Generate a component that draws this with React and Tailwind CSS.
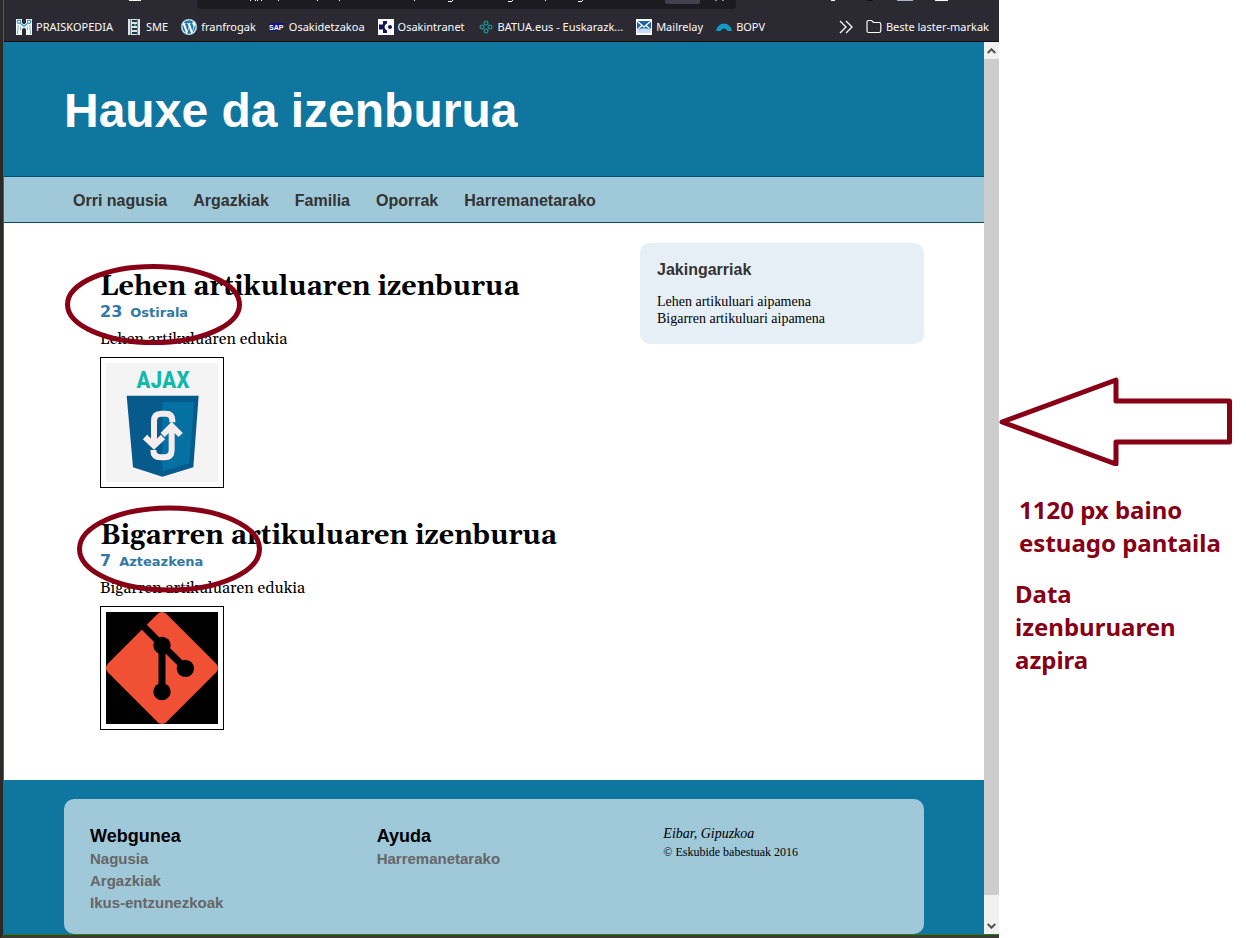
import React from "react";
import { FaWordpress } from "react-icons/fa";

const MAROON = "#880015";

function TowersIcon() {
  return (
    <svg width="16" height="16" viewBox="0 0 16 16" aria-hidden="true">
      <rect width="16" height="16" fill="#fff" />
      <path d="M6 0h4v4L8 5.500 6 4z" fill="#2b2a33" />
      <path d="M6 16v-5q0-2 2-2t2 2v5z" fill="#2b2a33" />
      <g fill="none" stroke="#2f8fb8" strokeWidth="1.2">
        <circle cx="3" cy="2.8" r="1.700" />
        <circle cx="13" cy="2.8" r="1.700" />
        <path d="M4.500 4.500 8 7.500 11.500 4.500" />
        <path d="M2.200 6 1.500 15M4.800 7.500 4.500 11M11.200 7.500l.3 3.500M13.800 6l.7 9" strokeWidth="0.700" />
      </g>
    </svg>
  );
}

function TowerIcon() {
  return (
    <svg width="16" height="16" viewBox="0 0 16 16" aria-hidden="true">
      <rect x="2" width="12" height="16" fill="#dfe3e6" />
      <rect x="4" y="0" width="1" height="16" fill="#7c838a" />
      <rect x="11" y="0" width="1" height="16" fill="#7c838a" />
      <g fill="#173c46">
        <rect x="6" y="1" width="5" height="2" />
        <rect x="6" y="5" width="5" height="2" />
        <rect x="6" y="9" width="5" height="2" />
        <rect x="6" y="13" width="5" height="2" />
      </g>
      <rect x="8" y="5" width="2" height="2" fill="#3f9a80" />
    </svg>
  );
}

function WordpressIcon() {
  return (
    <span className="flex size-4 items-center justify-center rounded-full bg-white text-[#1f7cab]">
      <FaWordpress size={16} aria-hidden="true" />
    </span>
  );
}

function SapIcon() {
  return (
    <svg width="16" height="16" viewBox="0 0 16 16" aria-hidden="true">
      <path d="M0 4h16L8 12H0z" fill="#12128a" />
      <text x="0" y="10.500" fontSize="7" fontWeight="700" fontFamily="Liberation Sans, sans-serif" fill="#fff">
        SAP
      </text>
    </svg>
  );
}

function CrossIcon() {
  return (
    <svg width="16" height="16" viewBox="0 0 16 16" aria-hidden="true">
      <rect width="16" height="16" fill="#fff" />
      <path d="M5 2h4v2.500Q6.500 5.500 6.500 8T9 11.500V14H5v-3.500H1v-5h4z" fill="#14145c" />
      <circle cx="12" cy="8" r="2" fill="#14145c" />
    </svg>
  );
}

function ClusterIcon() {
  return (
    <svg width="16" height="16" viewBox="0 0 16 16" aria-hidden="true">
      <g fill="none" stroke="#1f9390" strokeWidth="1.200">
        <circle cx="8" cy="4" r="1.900" />
        <circle cx="8" cy="12" r="1.900" />
        <circle cx="4" cy="8" r="1.900" />
        <circle cx="12" cy="8" r="1.900" />
      </g>
    </svg>
  );
}

function MailIcon() {
  return (
    <svg width="16" height="16" viewBox="0 0 16 16" aria-hidden="true">
      <rect width="16" height="16" fill="#fff" />
      <path d="M1 2h14v9H1z" fill="#1d64a8" />
      <path d="M1 2l7 6 7-6M1 11l5-4.500M15 11l-5-4.500" fill="none" stroke="#fff" strokeWidth="1.200" />
      <path d="M1 14v-2.500Q8 7 15 11.500V14z" fill="#cbdcf2" />
    </svg>
  );
}

function ArchIcon() {
  return (
    <svg width="16" height="16" viewBox="0 0 16 16" aria-hidden="true">
      <path d="M0 12Q2 4.500 8 4.500T16 12L11.500 12Q10.500 9.500 8 9.500T4.500 12z" fill="#159ac6" />
    </svg>
  );
}

const bookmarks = [
  { label: "PRAISKOPEDIA", icon: <TowersIcon /> },
  { label: "SME", icon: <TowerIcon /> },
  { label: "franfrogak", icon: <WordpressIcon /> },
  { label: "Osakidetzakoa", icon: <SapIcon /> },
  { label: "Osakintranet", icon: <CrossIcon /> },
  { label: "BATUA.eus - Euskarazk...", icon: <ClusterIcon /> },
  { label: "Mailrelay", icon: <MailIcon /> },
  { label: "BOPV", icon: <ArchIcon /> },
];

function BrowserBar() {
  return (
    <div className="border-b border-[#0c0c0d] bg-[#2b2a33]">
      <svg className="block" width="980" height="13" viewBox="4 0 980 13" aria-hidden="true">
        <path d="M197 0h539v5q0 4-4 4H201q-4 0-4-4z" fill="#1c1b22" />
        <path d="M665 0h35v2q0 2-2 2h-31q-2 0-2-2z" fill="#42414d" />
        <g fill="#fbfbfe">
          <rect x="129" width="12" height="1" />
          <path d="M250 0h1v1h-1zM255 0h1v1h-1zM257 0h1v1h-1zM261 0h1v1h-1zM278 0h1v1h-1zM317 0h1v1h-1zM339 0h1v1h-1zM414 0h1v1h-1zM545 0h1v1h-1z" />
          <path d="M448 1h4v1h-4zM508 1h4v1h-4zM578 1h4v1h-4zM452 0h1v1h-1zM512 0h1v1h-1zM582 0h1v1h-1z" />
          <rect x="831" width="4" height="1" />
          <rect x="935" width="13" height="1" />
        </g>
        <path d="M715 0h2v1h-2zM722 0h2v1h-2z" fill="#8f8f98" />
        <rect x="867" width="6" height="1" fill="#111" />
        <rect x="897" width="16" height="1" fill="#a9b6bf" />
      </svg>
      <nav
        aria-label="Laster-markak"
        className="flex h-7 items-center gap-[13px] pl-3 pr-[10px] font-['Noto_Sans',sans-serif] text-[11px] leading-4 text-[#fbfbfe]"
      >
        {bookmarks.map((b) => (
          <a key={b.label} href="#" className="flex items-center gap-1 whitespace-nowrap">
            {b.icon}
            {b.label}
          </a>
        ))}
        <button type="button" aria-label="Gehiago" className="ml-auto">
          <svg width="14" height="14" viewBox="0 0 14 14" fill="none" stroke="#fbfbfe" strokeWidth="1.300" aria-hidden="true">
            <path d="M1 1l6 6-6 6M7 1l6 6-6 6" />
          </svg>
        </button>
        <a href="#" className="flex items-center gap-1 whitespace-nowrap">
          <svg width="16" height="16" viewBox="0 0 16 16" fill="none" stroke="#fbfbfe" strokeWidth="1.200" aria-hidden="true">
            <path d="M1 3.200q0-1.700 1.700-1.700H5.500L7.500 3.500H13q1.800 0 1.800 1.800v6.400q0 1.800-1.800 1.800H2.700Q1 13.500 1 11.700z" />
          </svg>
          Beste laster-markak
        </a>
      </nav>
    </div>
  );
}

function AjaxLogo() {
  return (
    <svg className="block" width="112" height="119" viewBox="0 0 336 357" role="img" aria-label="AJAX">
      <rect width="336" height="357" fill="#f4f4f4" />
      <text
        x="171"
        y="76"
        textAnchor="middle"
        fontSize="72"
        fontWeight="700"
        fontFamily="'Roboto Condensed', 'Liberation Sans Narrow', 'DejaVu Sans Condensed', sans-serif"
        fill="#10b9ab"
      >
        AJAX
      </text>
      <path d="M62 98H278L262 313 169 341 81 313z" fill="#065b8c" />
      <path d="M169 117H264L250 301 169 325z" fill="#0571a3" />
      <g fill="none" stroke="#f6ecee" strokeWidth="18">
        <path d="M199 178v-6q0-20-20-20h-13q-22 0-22 22v68" />
        <path d="M117 222l27 26 27-26" />
        <path d="M142 261q0 22 22 22h11q22 0 22-22V196" />
        <path d="M170 216l27-27 27 27" />
      </g>
    </svg>
  );
}

function GitLogo() {
  return (
    <svg className="block" width="112" height="112" viewBox="0 0 336 336" role="img" aria-label="Git">
      <rect width="336" height="336" fill="#000" />
      <rect x="44" y="44" width="248" height="248" rx="18" fill="#f05033" transform="rotate(45 168 168)" />
      <g fill="none" stroke="#000" strokeWidth="21">
        <path d="M106 37L168 99 238 169M168 99V238" />
      </g>
      <circle cx="168" cy="100" r="26" />
      <circle cx="238" cy="169" r="26" />
      <circle cx="168" cy="239" r="26" />
    </svg>
  );
}

function Article({ title, day, weekday, text, children, mark }) {
  return (
    <article className="relative font-[Gelasio,'DejaVu_Serif',serif]">
      <h2 className="whitespace-nowrap text-[27px] font-bold leading-8">{title}</h2>
      <p className="flex items-baseline gap-2 font-['DejaVu_Sans',sans-serif] text-[13px] font-bold leading-[18px] text-[#3179a3]">
        <span className="text-[16px]">{day}</span>
        {weekday}
      </p>
      <p className="mt-[5px] text-[16px] leading-6">{text}</p>
      <div className="mt-1.5 w-fit border border-black p-[5px]">{children}</div>
      {mark}
    </article>
  );
}

function ScrollBar() {
  return (
    <div className="flex w-[15px] shrink-0 flex-col bg-[#f0f0f0]">
      <button type="button" aria-label="Gora" className="flex h-[17px] items-center justify-center">
        <svg width="9" height="6" viewBox="0 0 9 6" fill="none" stroke="#505050" strokeWidth="2" aria-hidden="true">
          <path d="M.7 5L4.500 1.300 8.300 5" />
        </svg>
      </button>
      <div className="flex-1 bg-[#cdcdcd]" />
      <button type="button" aria-label="Behera" className="mt-[22px] flex h-[17px] items-center justify-center">
        <svg width="9" height="6" viewBox="0 0 9 6" fill="none" stroke="#505050" strokeWidth="2" aria-hidden="true">
          <path d="M.7 1L4.500 4.700 8.300 1" />
        </svg>
      </button>
    </div>
  );
}

const menu = ["Orri nagusia", "Argazkiak", "Familia", "Oporrak", "Harremanetarako"];

function Site() {
  return (
    <div className="flex min-w-0 flex-1 flex-col bg-white text-black">
      <header className="bg-[#0f76a0] px-[60px] pb-[37px] pt-[41px]">
        <h1 className="font-['Liberation_Sans',sans-serif] text-[48px] font-bold leading-[56px] text-white">
          Hauxe da izenburua
        </h1>
      </header>
      <nav
        aria-label="Menua"
        className="flex gap-[26px] border-y border-[#0b4d69] bg-[#9fc8d9] px-[69px] pb-[9px] pt-3 font-['Liberation_Sans',sans-serif] text-base font-bold text-[#333]"
      >
        {menu.map((m) => (
          <a key={m} href="#" className="whitespace-nowrap">
            {m}
          </a>
        ))}
      </nav>
      <main className="flex flex-1 items-start px-[60px] pb-[50px] pt-5">
        <div className="flex flex-1 flex-col gap-8 pl-9 pt-7">
          <Article
            title="Lehen artikuluaren izenburua"
            day="23"
            weekday="Ostirala"
            text="Lehen artikuluaren edukia"
            mark={
              <svg className="absolute left-[-35px] top-[-7px]" width="177" height="81" aria-hidden="true">
                <ellipse cx="88.500" cy="40.500" rx="86" ry="38" fill="none" stroke={MAROON} strokeWidth="5" />
              </svg>
            }
          >
            <AjaxLogo />
          </Article>
          <Article
            title="Bigarren artikuluaren izenburua"
            day="7"
            weekday="Azteazkena"
            text="Bigarren artikuluaren edukia"
            mark={
              <svg className="absolute left-[-23px] top-[-15px]" width="185" height="88" aria-hidden="true">
                <ellipse cx="92.500" cy="44" rx="90" ry="41" fill="none" stroke={MAROON} strokeWidth="5" />
              </svg>
            }
          >
            <GitLogo />
          </Article>
        </div>
        <aside className="w-[284px] rounded-[10px] bg-[#e6eff5] px-[17px] pb-[17px] pt-[15px]">
          <h3 className="font-['Liberation_Sans',sans-serif] text-base font-bold text-[#333]">Jakingarriak</h3>
          <ul className="mt-[11px] font-['Liberation_Serif',serif] text-[14px] leading-[17px]">
            <li>Lehen artikuluari aipamena</li>
            <li>Bigarren artikuluari aipamena</li>
          </ul>
        </aside>
      </main>
      <footer className="bg-[#0f76a0] px-[60px] pt-[19px]">
        <div className="grid grid-cols-3 rounded-[10px] bg-[#9fc8d9] pb-5 pt-[25px] font-['Liberation_Sans',sans-serif]">
          <section className="pl-[26px]">
            <h3 className="text-[18px] font-bold leading-6">Webgunea</h3>
            <ul className="text-[15px] font-bold leading-[22px] text-[#666]">
              <li><a href="#">Nagusia</a></li>
              <li><a href="#">Argazkiak</a></li>
              <li><a href="#">Ikus-entzunezkoak</a></li>
            </ul>
          </section>
          <section className="pl-[26px]">
            <h3 className="text-[18px] font-bold leading-6">Ayuda</h3>
            <ul className="text-[15px] font-bold leading-[22px] text-[#666]">
              <li><a href="#">Harremanetarako</a></li>
            </ul>
          </section>
          <section className="pl-[26px] font-['Liberation_Serif',serif]">
            <address className="text-[14px] italic leading-5">Eibar, Gipuzkoa</address>
            <p className="text-[12px] leading-4">© Eskubide babestuak 2016</p>
          </section>
        </div>
      </footer>
    </div>
  );
}

export default function App() {
  return (
    <div className="flex min-h-screen bg-white">
      <div className="flex min-w-0 flex-1 flex-col border-b-3 border-l-3 border-b-[#3d3c33] border-l-[#2b2a26]">
        <div className="flex flex-1 flex-col border-b border-l border-[#1f8020]">
          <BrowserBar />
          <div className="flex flex-1">
            <Site />
            <ScrollBar />
          </div>
        </div>
      </div>
      <aside className="w-[247px] shrink-0 pt-[376px] font-['Noto_Sans',sans-serif] text-[24px] font-bold leading-[33px] text-[#880015]">
        <svg className="block" width="233" height="90" viewBox="0 0 233 90" aria-hidden="true">
          <path
            d="M3 46L117 4V25H230.500V66H117V88z"
            fill="none"
            stroke={MAROON}
            strokeWidth="5"
            strokeLinejoin="round"
          />
        </svg>
        <p className="mt-[27px] px-5">1120 px baino estuago pantaila</p>
        <p className="mt-[18px] w-[190px] px-4">Data izenburuaren azpira</p>
      </aside>
    </div>
  );
}
